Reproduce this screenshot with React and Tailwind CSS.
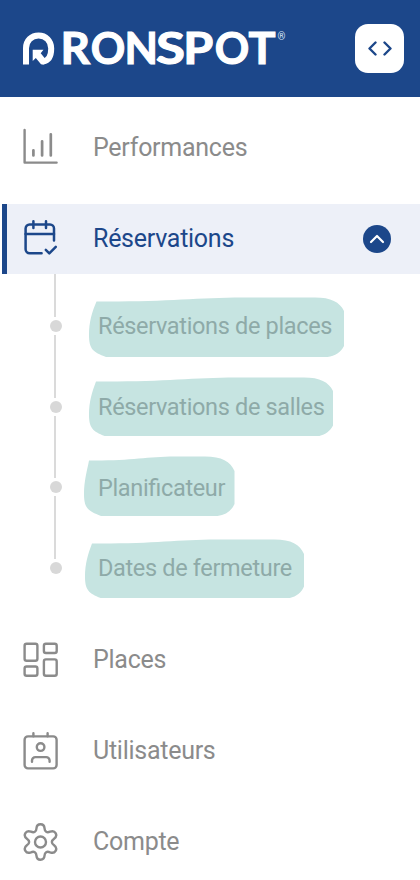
import React from "react";

const ChartIcon = () => (
  <svg width="36" height="38" viewBox="0 0 36 38" fill="none" stroke="currentColor" strokeWidth="2.4" strokeLinecap="round" strokeLinejoin="round">
    <path d="M1.6 2v32.6h32" />
    <path strokeWidth="2.7" d="M10.4 22.3v5.2M19.1 13.3v14.2M27.8 6.3v21.2" />
  </svg>
);

const CalendarIcon = () => (
  <svg width="36" height="38" viewBox="0 0 36 38" fill="none" stroke="currentColor" strokeWidth="2.5" strokeLinecap="round" strokeLinejoin="round">
    <path d="M18.6 33.2H6.6a4 4 0 0 1-4-4V8.4a4 4 0 0 1 4-4h20.4a4 4 0 0 1 4 4v12.2" />
    <path d="M2.6 14.1h28.4M10.4 1.3v6.7M23 1.3v6.7M22.8 29.8l3.5 3.5 6.5-6.5" />
  </svg>
);

const GridIcon = () => (
  <svg width="36" height="38" viewBox="0 0 36 38" fill="none" stroke="currentColor" strokeWidth="2.4">
    <rect x="1.6" y="3.7" width="12.8" height="17" rx="2" />
    <rect x="20.9" y="3.7" width="12.8" height="9.3" rx="2" />
    <rect x="1.6" y="26.5" width="12.8" height="9.3" rx="2" />
    <rect x="20.9" y="19.4" width="12.8" height="16.4" rx="2" />
  </svg>
);

const UserIcon = () => (
  <svg width="36" height="40" viewBox="0 0 36 40" fill="none" stroke="currentColor" strokeWidth="2.4" strokeLinecap="round" strokeLinejoin="round">
    <rect x="1.6" y="6.4" width="32" height="32" rx="3.4" />
    <path d="M10.4 3.3v3M24.6 3.3v3" />
    <circle cx="17.6" cy="17.1" r="3.8" />
    <path d="M9 31.7v-1.2a3.4 3.4 0 0 1 3.4-3.4h10.8a3.4 3.4 0 0 1 3.4 3.4v1.2" />
  </svg>
);

const GearIcon = () => (
  <svg width="36" height="38" viewBox="0 0 36 38" fill="none" stroke="currentColor" strokeWidth="2.4" strokeLinejoin="round">
    <circle cx="17.5" cy="19" r="5.5" />
    <path d="M13.5 5.2C13.7 2.6 15.2 1.3 17.5 1.3s3.8 1.3 4 3.9c.2 3.6 2.4 4.9 5.6 3.5 2.5-1 4.4-.5 5.5 1.4s.7 4-1.5 5.6c-3 2.1-3 4.5 0 6.6 2.2 1.6 2.6 3.7 1.5 5.6s-3 2.4-5.5 1.4c-3.2-1.4-5.4-.1-5.6 3.5-.2 2.6-1.7 3.9-4 3.9s-3.8-1.3-4-3.9c-.2-3.6-2.4-4.9-5.6-3.5-2.5 1-4.4.5-5.5-1.4s-.7-4 1.5-5.6c3-2.1 3-4.5 0-6.6-2.2-1.6-2.6-3.7-1.5-5.6s3-2.4 5.5-1.4c3.2 1.4 5.4.1 5.6-3.5z" />
  </svg>
);

// letter, left edge, advance
const wordmark = [
  ["R", 37.4, 29.5],
  ["O", 67.8, 34.5],
  ["N", 101.6, 33.5],
  ["S", 133, 29],
  ["P", 160.2, 30],
  ["O", 191.7, 34.5],
  ["T", 225.4, 27],
];

const Logo = () => (
  <svg width="264" height="64" viewBox="0 -12 264 64" fill="none">
    <path d="M3 35.6V19.3C3 11.5 8.5 6.6 15.6 6.6S28.2 11.5 28.2 19.5C28.2 27 26 31.5 20.2 32.6" stroke="#fff" strokeWidth="6" />
    <path d="M9.7 20.8h10.8l-2.8 3.4 6 7.4-3.2 4.2-2.5-.6-5.2-6.2-3.1 3z" fill="#fff" />
    <g fill="#fff" stroke="#fff" strokeWidth="1.1" className="font-['Lato',sans-serif] text-[43.5px] font-bold">
      {wordmark.map(([letter, x, width]) => (
        <text key={x} x={x} y="35.3" textLength={width} lengthAdjust="spacingAndGlyphs">{letter}</text>
      ))}
    </g>
    <text x="254.5" y="11" fill="#dbe5f4" className="font-['Roboto',sans-serif] text-[10px]">®</text>
  </svg>
);

const Highlight = ({ w, h, start, className }) => (
  <svg width={w} height={h} className={className} fill="#c6e4e1">
    <path
      d={`M${start} 4.5C${w * 0.3} 5 ${w * 0.42} .7 ${w * 0.6} .5H${w - 30}C${w - 13} .4 ${w - 4} 5.5 ${w} 15V${h - 12}C${w - 3} ${h - 5} ${w - 9} ${h - 1} ${w - 17} ${h}H17C4 ${h - 5} 0 ${h - 8} 0 ${h - 22}C0 25 3 15 ${start} 4.5Z`}
    />
  </svg>
);

const subItems = [
  { label: "Réservations de places", w: 255.5, h: 60, start: 7.5, place: "absolute -left-[9.5px] -top-5" },
  { label: "Réservations de salles", w: 244.5, h: 59.5, start: 7, place: "absolute -left-[9.5px] -top-[21px]" },
  { label: "Planificateur", w: 150.5, h: 60, start: 5, place: "absolute -left-[14px] -top-[22px]" },
  { label: "Dates de fermeture", w: 219, h: 59.5, start: 7, place: "absolute -left-[13px] -top-[20.5px]" },
];

const NavItem = ({ icon, label }) => (
  <a className="flex h-[70px] items-center pl-[23px] text-[#8b8b8b]">
    <span className="w-[70px]">{icon}</span>
    <span className="text-[25px] leading-none tracking-[-0.27px]">{label}</span>
  </a>
);

const SubMenu = () => (
  <ul>
    {subItems.map((item, i) => (
      <li key={item.label} className={i === 0 ? "flex h-[61px]" : "flex h-[80.7px]"}>
        <div className="flex w-[98px] flex-col pl-[50px]">
          <span className="ml-1 w-0.5 flex-1 bg-[#dadada]"></span>
          <span className="my-[3px] size-3 rounded-full bg-[#d8d8d8]"></span>
        </div>
        <div className="relative flex h-[18px] items-center self-end">
          <Highlight w={item.w} h={item.h} start={item.start} className={item.place} />
          <span className="relative whitespace-nowrap pt-[2px] text-[23.5px] leading-none tracking-[-0.34px] text-[#8eaaa8] [font-feature-settings:'liga']">{item.label}</span>
        </div>
      </li>
    ))}
  </ul>
);

const App = () => {
  return (
    <div className="h-[880px] w-[420px] overflow-hidden bg-white font-['Roboto',sans-serif]">
      <header className="flex h-[97px] items-center justify-between bg-[#1c478a] pl-[23px] pr-4">
        <Logo />
        <button aria-label="Toggle menu" className="flex size-[49px] items-center justify-center rounded-[13px] bg-white text-[#1c478a]">
          <svg width="26" height="16" viewBox="0 0 26 16" fill="none" stroke="currentColor" strokeWidth="2.4" strokeLinecap="round" strokeLinejoin="round">
            <path d="M8.5 1.5l-6 6 6 6M17.5 1.5l6 6-6 6" />
          </svg>
        </button>
      </header>

      <nav className="pt-[15px]">
        <NavItem icon={<ChartIcon />} label="Performances" />

        <a className="ml-0.5 mt-[22px] flex h-[70px] items-center border-l-[5px] border-[#1c478a] bg-[#edf0f8] pl-4 pr-[29px] text-[#1c478a]">
          <span className="w-[70px]"><CalendarIcon /></span>
          <span className="flex-1 pb-0.5 text-[25px] leading-none tracking-[-0.27px]">Réservations</span>
          <span className="flex size-7 items-center justify-center rounded-full bg-[#1c478a] text-white">
            <svg width="16" height="10" viewBox="0 0 16 10" fill="none" stroke="currentColor" strokeWidth="2.2" strokeLinecap="round" strokeLinejoin="round">
              <path d="M2 8l6-6 6 6" />
            </svg>
          </span>
        </a>

        <SubMenu />

        <div className="mt-[47.2px] flex flex-col gap-[21.2px]">
          <NavItem icon={<GridIcon />} label="Places" />
          <NavItem icon={<UserIcon />} label="Utilisateurs" />
          <NavItem icon={<GearIcon />} label="Compte" />
        </div>
      </nav>
    </div>
  );
};

export default App;
